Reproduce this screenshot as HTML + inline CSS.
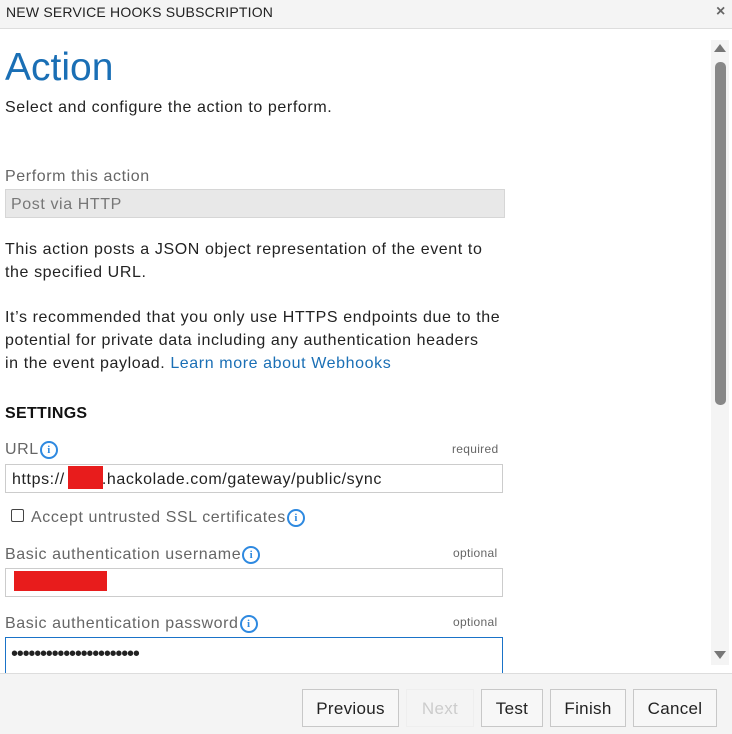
<!DOCTYPE html>
<html><head><style>
body{margin:0;width:732px;height:733px;overflow:hidden;background:#fff;font-family:"Segoe UI","Liberation Sans",sans-serif;color:#222;position:relative}
.a{position:absolute;white-space:nowrap}
.t{letter-spacing:0.6px}
.hdr{left:0;top:0;width:732px;height:28px;background:#f4f4f4;border-bottom:1px solid #ddd}
.ft{left:0;top:673px;width:732px;height:60px;background:#f4f4f4;border-top:1px solid #ddd}
.inp{position:absolute;border:1px solid #ccc;background:#fff;box-sizing:border-box}
.lbl{color:#666;font-size:16px;letter-spacing:0.6px}
.opt{color:#666;font-size:12px;letter-spacing:0.3px}
.info{display:inline-block;vertical-align:1px;margin-left:1px;width:18px;height:18px;border:2px solid #2e89e0;border-radius:50%;box-sizing:border-box;color:#2e89e0;font-size:11px;font-weight:bold;text-align:center;line-height:14px;font-family:"Liberation Serif",serif;letter-spacing:0}
.btn{position:absolute;top:689px;height:38px;border:1px solid #c8c8c8;background:#f7f7f7;box-sizing:border-box;font-size:17px;text-align:center;line-height:38px;color:#222;letter-spacing:0.3px}
.red{position:absolute;background:#e81c1c}
</style></head><body>
<div class="a hdr"></div>
<div class="a" style="left:6px;top:4px;font-size:14px;color:#222;letter-spacing:0.2px">NEW SERVICE HOOKS SUBSCRIPTION</div>
<div class="a" style="left:716px;top:3px;font-size:16px;color:#666;font-weight:bold">×</div>

<div class="a" style="left:5px;top:46px;font-size:39px;color:#1a6fb5;font-weight:300">Action</div>
<div class="a t" style="left:5px;top:99px;font-size:16px">Select and configure the action to perform.</div>
<div class="a lbl" style="left:5px;top:168px">Perform this action</div>
<div class="inp" style="left:5px;top:189px;width:500px;height:29px;background:#e8e8e8;border-color:#d6d6d6"></div>
<div class="a t" style="left:11px;top:196px;font-size:16px;color:#777">Post via HTTP</div>
<div class="a t" style="left:5px;top:238px;font-size:16px;line-height:23px">This action posts a JSON object representation of the event to<br>the specified URL.</div>
<div class="a t" style="left:5px;top:306px;font-size:16px;line-height:23px">It’s recommended that you only use HTTPS endpoints due to the<br>potential for private data including any authentication headers<br>in the event payload. <span style="color:#1a6fb5">Learn more about Webhooks</span></div>
<div class="a" style="left:5px;top:405px;font-size:16px;font-weight:bold;color:#111;letter-spacing:0.3px">SETTINGS</div>

<div class="a lbl" style="left:5px;top:441px">URL<span class="info">i</span></div>
<div class="a opt" style="left:452px;top:442px">required</div>
<div class="inp" style="left:5px;top:464px;width:498px;height:29px"></div>
<div class="a t" style="left:12px;top:471px;font-size:16px">https://<span style="display:inline-block;width:37px"></span>.hackolade.com/gateway/public/sync</div>
<div class="red" style="left:68px;top:466px;width:35px;height:23px"></div>
<div class="a" style="left:11px;top:509px;width:13px;height:13px;border:1px solid #444;border-radius:2px;box-sizing:border-box"></div>
<div class="a lbl" style="left:31px;top:509px">Accept untrusted SSL certificates<span class="info">i</span></div>

<div class="a lbl" style="left:5px;top:546px">Basic authentication username<span class="info">i</span></div>
<div class="a opt" style="left:453px;top:546px">optional</div>
<div class="inp" style="left:5px;top:568px;width:498px;height:29px"></div>
<div class="red" style="left:14px;top:571px;width:93px;height:20px"></div>

<div class="a lbl" style="left:5px;top:615px">Basic authentication password<span class="info">i</span></div>
<div class="a opt" style="left:453px;top:615px">optional</div>
<div class="inp" style="left:5px;top:637px;width:498px;height:40px;border-color:#1a73c8"></div>
<div class="a" style="left:11px;top:643px;font-size:20px;letter-spacing:-1.2px">••••••••••••••••••••••</div>

<div class="a" style="left:711px;top:40px;width:18px;height:625px;background:#f4f4f4"></div>
<div class="a" style="left:714px;top:44px;width:0;height:0;border-left:6px solid transparent;border-right:6px solid transparent;border-bottom:8px solid #777"></div>
<div class="a" style="left:715px;top:62px;width:11px;height:343px;background:#888;border-radius:5px"></div>
<div class="a" style="left:714px;top:651px;width:0;height:0;border-left:6px solid transparent;border-right:6px solid transparent;border-top:8px solid #777"></div>

<div class="a ft"></div>
<div class="btn" style="left:302px;width:97px">Previous</div>
<div class="btn" style="left:406px;width:68px;color:#ccc;border-color:#eee;background:#f4f4f4">Next</div>
<div class="btn" style="left:481px;width:62px">Test</div>
<div class="btn" style="left:550px;width:76px">Finish</div>
<div class="btn" style="left:633px;width:84px">Cancel</div>
</body></html>
